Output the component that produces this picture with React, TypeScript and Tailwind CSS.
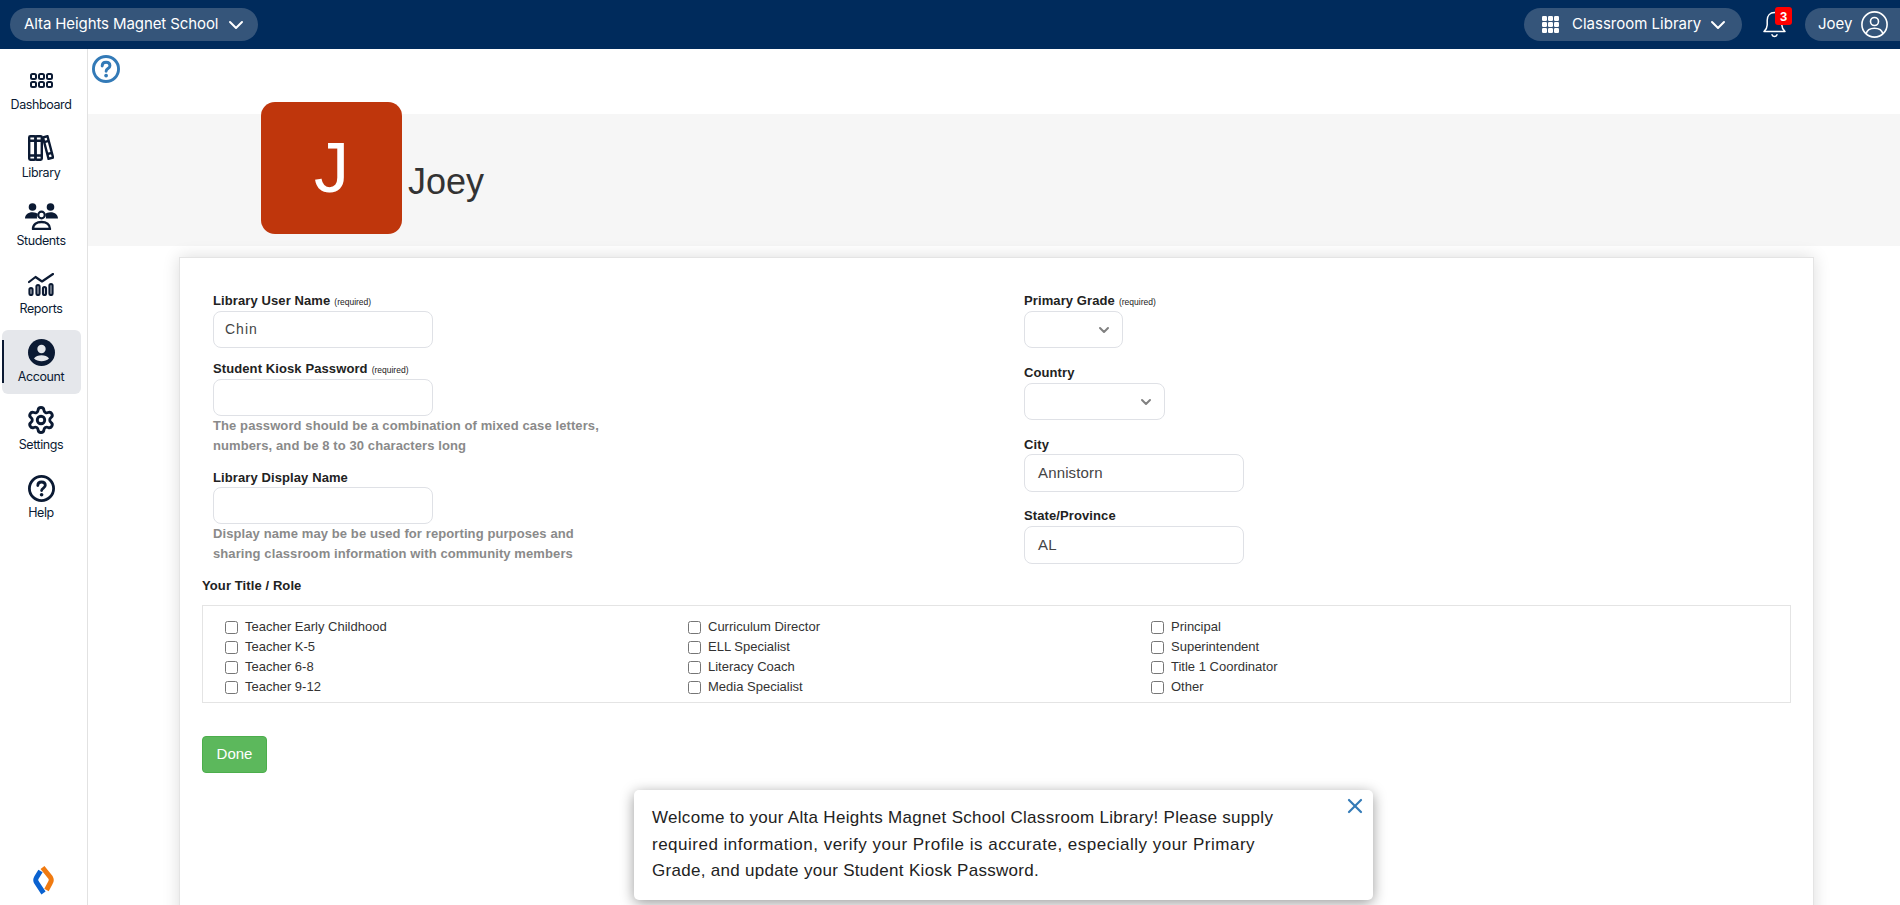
import React from "react";
import { ChevronDown, Settings as Gear, X } from "lucide-react";

const INK = "#0b1a33";
const navFont = "font-['Inter','Noto_Sans',sans-serif]";

function DashIcon() {
  return (
    <svg viewBox="0 0 23 15" className="w-[23px] h-[15px]" fill="none" stroke={INK} strokeWidth="2">
      {[1, 9, 17].map((x) => [1, 9].map((y) => <rect key={x + "-" + y} x={x} y={y} width="5" height="5" rx="1.500" />))}
    </svg>
  );
}
function LibIcon() {
  return (
    <svg viewBox="0 0 26 26" className="w-[26px] h-[26px]" fill="none" stroke={INK} strokeWidth="2.400" strokeLinejoin="round">
      <rect x="1.200" y="1.200" width="6.300" height="23.600" rx="1.200" />
      <rect x="7.500" y="1.200" width="6.300" height="23.600" rx="1.200" />
      <path d="M15 2.500l4.500-1.300 5.600 21.300-4.600 1.300z" />
      <path d="M1 5.800h13M1 20.500h13M16 7.200l4.700-1.300M19.500 19l4.500-1.200" />
    </svg>
  );
}
function StudentsIcon() {
  return (
    <svg viewBox="0 0 33 27" className="w-[33px] h-[27px]" fill={INK}>
      <circle cx="7.500" cy="4" r="3.800" />
      <circle cx="25.500" cy="4" r="3.800" />
      <path d="M0 15.500c0-3.800 3-6.300 7.500-6.300 2.300 0 4.200.7 5.200 1.800-.8 1.300-1 3-.5 4.500z" />
      <path d="M33 15.500c0-3.800-3-6.300-7.500-6.300-2.300 0-4.200.7-5.200 1.800.8 1.300 1 3 .5 4.500z" />
      <circle cx="16.500" cy="12" r="3.300" fill="none" stroke={INK} strokeWidth="2.200" />
      <path d="M8 26c0-4.500 3.800-7 8.500-7s8.500 2.500 8.500 7z" fill="none" stroke={INK} strokeWidth="2.400" strokeLinejoin="round" />
    </svg>
  );
}
function ReportsIcon() {
  return (
    <svg viewBox="0 0 26 23" className="w-[26px] h-[23px]" fill="none" stroke={INK} strokeWidth="2.200" strokeLinecap="round" strokeLinejoin="round">
      <path d="M1 9l6.500-5 6.500 4.500L25 1" />
      <rect x="1.500" y="15" width="3" height="7" rx="1.500" />
      <rect x="8.500" y="12" width="3" height="10" rx="1.500" />
      <rect x="15" y="14" width="3" height="8" rx="1.500" />
      <rect x="21.500" y="11" width="3" height="11" rx="1.500" />
    </svg>
  );
}
function AccountIcon() {
  return (
    <svg viewBox="0 0 27 27" className="w-[27px] h-[27px]">
      <circle cx="13.500" cy="13.500" r="13.500" fill={INK} />
      <circle cx="13.500" cy="10" r="4.200" fill="#e5e7eb" />
      <path d="M6 19.500c1.500-2.300 4.500-3.300 7.500-3.300s6 1 7.500 3.300c-2 1.800-4.500 2.700-7.500 2.700s-5.500-.9-7.500-2.700z" fill="#e5e7eb" />
    </svg>
  );
}
function HelpIcon({ color, sizeClass, sw }: { color: string; sizeClass: string; sw: number }) {
  return (
    <svg viewBox="0 0 27 27" className={sizeClass} fill="none">
      <circle cx="13.500" cy="13.500" r={13.5 - sw / 2} stroke={color} strokeWidth={sw} />
      <path d="M9.800 10.600c0-2.200 1.600-3.600 3.800-3.600s3.700 1.300 3.700 3.300c0 2.800-3.700 2.700-3.700 5.300" stroke={color} strokeWidth="2.800" strokeLinecap="round" />
      <circle cx="13.600" cy="19.800" r="1.800" fill={color} />
    </svg>
  );
}
function Logo() {
  return (
    <svg viewBox="0 0 21 31" className="w-[21px] h-[31px]" fill="none" strokeWidth="5">
      <path d="M9.500 2.500L17.500 12.500Q19 15 17.500 17.500L13.500 25" stroke="#f07a10" />
      <path d="M7.500 6L3.500 12.500Q2 15 3.500 17.500L10.500 28" stroke="#0a62d0" />
    </svg>
  );
}
function GridIcon() {
  return (
    <svg viewBox="0 0 17 17" className="w-[17px] h-[17px]" fill="#fff">
      {[0, 6, 12].map((x) => [0, 6, 12].map((y) => <rect key={x + "-" + y} x={x} y={y} width="5" height="5" rx="1.200" />))}
    </svg>
  );
}
function BellIcon() {
  return (
    <svg viewBox="0 0 23 27" className="w-[23px] h-[27px]" fill="none" stroke="#fff" strokeWidth="1.500" strokeLinecap="round" strokeLinejoin="round">
      <path d="M11.500 1.500c-4.500 0-7.300 3.300-7.300 7.800v4.700c0 3-1.700 5-3.200 6.500h21c-1.500-1.500-3.200-3.500-3.200-6.500V9.300c0-4.500-2.800-7.800-7.300-7.800z" />
      <path d="M9 23.700c.5 1.300 1.500 1.900 2.500 1.900s2-.6 2.500-1.900" />
    </svg>
  );
}
function UserIcon() {
  return (
    <svg viewBox="0 0 27 27" className="w-[27px] h-[27px]" fill="none" stroke="#fff" strokeWidth="1.600">
      <circle cx="13.500" cy="13.500" r="12.600" />
      <circle cx="13.500" cy="10.500" r="4" />
      <path d="M5 23c1-4 4.500-5.800 8.500-5.800s7.500 1.800 8.500 5.800" />
    </svg>
  );
}

function NavItem({ label, icon, active }: { label: string; icon: React.ReactNode; active?: boolean }) {
  return (
    <div className={"relative h-[64px] w-[79px] flex flex-col items-center rounded-md " + (active ? "bg-[#e5e7eb]" : "")}>
      {active && <div className="absolute left-0 top-[10px] w-[2px] h-[43px] bg-[#0b1a33]" />}
      <div className="h-[44px] shrink-0 flex items-center justify-center">{icon}</div>
      <div className={navFont + " -mt-[5px] text-[12.5px] leading-[16px] text-[#0b1a33] tracking-[-0.4px]"}>{label}</div>
    </div>
  );
}

function Label({ children, req }: { children: React.ReactNode; req?: boolean }) {
  return (
    <div className="h-[16px] leading-[17px] text-[13px] font-bold text-[#222] tracking-[0.1px] whitespace-nowrap">
      {children}
      {req && <span className="ml-[4px] text-[8.5px] font-normal tracking-normal">(required)</span>}
    </div>
  );
}

function Box({ className, children }: { className: string; children?: React.ReactNode }) {
  return <div className={"border border-[#dfe1e6] rounded-[8px] bg-white flex items-center " + className}>{children}</div>;
}

function Select({ className }: { className: string }) {
  return (
    <Box className={"justify-end pr-[10px] h-[37px] " + className}>
      <ChevronDown size={16} strokeWidth={3} color="#808080" />
    </Box>
  );
}

function Hint({ lines }: { lines: string[] }) {
  return (
    <div className="text-[13px] leading-[20px] font-bold text-[#8a8a8a] tracking-[0.1px] whitespace-nowrap">
      {lines.map((l) => (
        <div key={l}>{l}</div>
      ))}
    </div>
  );
}

const roles = [
  ["Teacher Early Childhood", "Teacher K-5", "Teacher 6-8", "Teacher 9-12"],
  ["Curriculum Director", "ELL Specialist", "Literacy Coach", "Media Specialist"],
  ["Principal", "Superintendent", "Title 1 Coordinator", "Other"],
];

export default function App() {
  return (
    <div className="relative h-[905px] w-[1900px] overflow-hidden bg-white flex flex-col font-['Liberation_Sans',Arial,sans-serif]">
      <header className={navFont + " h-[49px] shrink-0 bg-[#002b5c] flex items-center justify-between text-white"}>
        <div className="ml-[10px] w-[248px] h-[33px] rounded-full bg-[#35557a] flex items-center pl-[14px]">
          <div className="w-[196px] overflow-hidden whitespace-nowrap text-[15px] tracking-[-0.1px]">Alta Heights Magnet School</div>
          <ChevronDown size={24} strokeWidth={2} className="ml-[4px]" />
        </div>
        <div className="flex items-center">
          <div className="w-[218px] h-[33px] rounded-full bg-[#35557a] flex items-center pl-[18px]">
            <GridIcon />
            <div className="ml-[13px] w-[130px] whitespace-nowrap text-[15px]">Classroom Library</div>
            <ChevronDown size={24} strokeWidth={2} className="ml-[4px]" />
          </div>
          <div className="relative ml-[21px] w-[23px] h-[27px]">
            <BellIcon />
            <div className="absolute left-[12px] -top-[4px] w-[17px] h-[18px] rounded-[3px] bg-[#ff0000] flex items-center justify-center font-['Liberation_Sans',Arial,sans-serif] text-[13px] font-bold leading-none">
              3
            </div>
          </div>
          <div className="ml-[19px] w-[95px] h-[33px] rounded-l-full bg-[#35557a] flex items-center pl-[13px]">
            <div className="w-[43px] text-[15px]">Joey</div>
            <UserIcon />
          </div>
        </div>
      </header>

      <div className="flex flex-1 min-h-0">
        <aside className="w-[88px] shrink-0 border-r border-[#e2e2e2] flex flex-col items-center pt-[9px] pb-[9px] pr-[5px]">
          <div className="flex flex-col gap-[4px]">
            <NavItem label="Dashboard" icon={<DashIcon />} />
            <NavItem label="Library" icon={<LibIcon />} />
            <NavItem label="Students" icon={<StudentsIcon />} />
            <NavItem label="Reports" icon={<ReportsIcon />} />
            <NavItem label="Account" icon={<AccountIcon />} active />
            <NavItem label="Settings" icon={<Gear size={30} strokeWidth={2.3} color={INK} />} />
            <NavItem label="Help" icon={<HelpIcon color={INK} sizeClass="w-[27px] h-[27px]" sw={2.8} />} />
          </div>
          <div className="mt-auto pl-[5px]">
            <Logo />
          </div>
        </aside>

        <main className="flex-1 min-w-0">
          <div className="pl-[4px] pt-[6px] h-[65px]">
            <HelpIcon color="#337ab7" sizeClass="w-[28px] h-[28px]" sw={2.8} />
          </div>
          <div className="h-[132px] bg-[#f6f6f6] flex items-center pl-[173px]">
            <div className="self-start -mt-[12px] w-[141px] h-[132px] rounded-[14px] bg-[#bf360c] flex items-center justify-center text-white text-[70px] leading-none">
              J
            </div>
            <div className="ml-[6px] mt-[4px] text-[36px] leading-none text-[#333]">Joey</div>
          </div>

          <div className="ml-[91px] mt-[11px] w-[1635px] h-[700px] border border-[#e4e4e4] bg-white shadow-[0_0_16px_rgba(0,0,0,0.14)] px-[22px] pt-[34px]">
            <div className="flex pl-[11px]">
              <div className="w-[811px] shrink-0">
                <Label req>Library User Name</Label>
                <Box className="mt-[3px] w-[220px] h-[37px] pl-[11px] text-[14px] tracking-[1px] font-medium text-[#444]">Chin</Box>
                <div className="mt-[12px]">
                  <Label req>Student Kiosk Password</Label>
                </div>
                <Box className="mt-[3px] w-[220px] h-[37px]" />
                <Hint lines={["The password should be a combination of mixed case letters,", "numbers, and be 8 to 30 characters long"]} />
                <div className="mt-[13px]">
                  <Label>Library Display Name</Label>
                </div>
                <Box className="mt-[2px] w-[220px] h-[37px]" />
                <Hint lines={["Display name may be be used for reporting purposes and", "sharing classroom information with community members"]} />
              </div>
              <div className="flex-1">
                <Label req>Primary Grade</Label>
                <Select className="mt-[3px] w-[99px]" />
                <div className="mt-[16px]">
                  <Label>Country</Label>
                </div>
                <Select className="mt-[3px] w-[141px]" />
                <div className="mt-[16px]">
                  <Label>City</Label>
                </div>
                <Box className="mt-[2px] w-[220px] h-[38px] pl-[13px] text-[15px] tracking-[0.15px] text-[#444]">Annistorn</Box>
                <div className="mt-[15px]">
                  <Label>State/Province</Label>
                </div>
                <Box className="mt-[3px] w-[220px] h-[38px] pl-[13px] text-[15px] tracking-[0.15px] text-[#444]">AL</Box>
              </div>
            </div>

            <div className="mt-[13px]">
              <Label>Your Title / Role</Label>
            </div>
            <div className="mt-[12px] w-[1589px] border border-[#e4e4e4] pl-[22px] pt-[11px] pb-[5px] grid grid-cols-[463px_463px_1fr]">
              {roles.map((col, i) => (
                <div key={i}>
                  {col.map((r) => (
                    <div key={r} className="h-[20px] flex items-center text-[13px] text-[#333]">
                      <span className="w-[13px] h-[13px] border border-[#767676] rounded-[2.5px] bg-white shrink-0" />
                      <span className="ml-[7px]">{r}</span>
                    </div>
                  ))}
                </div>
              ))}
            </div>
            <div className="mt-[33px] w-[65px] h-[37px] rounded-[4px] bg-[#5cb85c] border border-[#4cae4c] text-white text-[15px] flex items-center justify-center">
              Done
            </div>
          </div>
        </main>
      </div>

      <div className="absolute left-[634px] top-[790px] w-[739px] h-[110px] bg-white rounded-[5px] shadow-[0_3px_14px_rgba(0,0,0,0.4)] pl-[18px] pt-[15px] text-[17px] leading-[26.5px] text-[#222] whitespace-nowrap">
        <div className="tracking-[0.3px]">Welcome to your Alta Heights Magnet School Classroom Library! Please supply</div>
        <div className="tracking-[0.5px]">required information, verify your Profile is accurate, especially your Primary</div>
        <div className="tracking-[0.3px]">Grade, and update your Student Kiosk Password.</div>
        <X size={24} strokeWidth={2.2} color="#337ab7" className="absolute right-[6px] top-[4px]" />
      </div>
    </div>
  );
}
